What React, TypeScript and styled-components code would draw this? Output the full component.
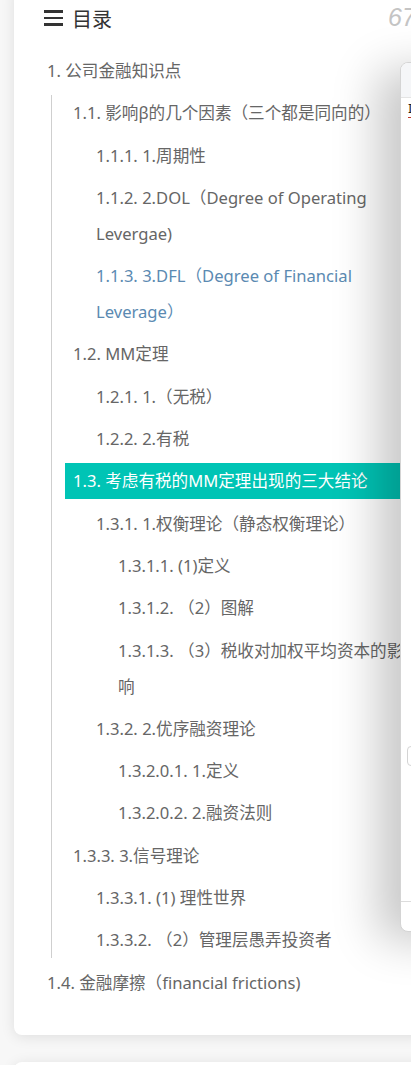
import React from 'react';
import styled, { createGlobalStyle } from 'styled-components';

type TocItem = { label: string; children?: TocItem[]; active?: boolean; visited?: boolean };

const toc: TocItem[] = [
  {
    label: '1. 公司金融知识点',
    children: [
      {
        label: '1.1. 影响β的几个因素（三个都是同向的）',
        children: [
          { label: '1.1.1. 1.周期性' },
          { label: '1.1.2. 2.DOL（Degree of Operating Levergae)' },
          { label: '1.1.3. 3.DFL（Degree of Financial Leverage）', visited: true },
        ],
      },
      {
        label: '1.2. MM定理',
        children: [{ label: '1.2.1. 1.（无税）' }, { label: '1.2.2. 2.有税' }],
      },
      {
        label: '1.3. 考虑有税的MM定理出现的三大结论',
        active: true,
        children: [
          {
            label: '1.3.1. 1.权衡理论（静态权衡理论）',
            children: [
              { label: '1.3.1.1. (1)定义' },
              { label: '1.3.1.2. （2）图解' },
              { label: '1.3.1.3. （3）税收对加权平均资本的影响' },
            ],
          },
          {
            label: '1.3.2. 2.优序融资理论',
            children: [{ label: '1.3.2.0.1. 1.定义' }, { label: '1.3.2.0.2. 2.融资法则' }],
          },
        ],
      },
      {
        label: '1.3.3. 3.信号理论',
        children: [{ label: '1.3.3.1. (1) 理性世界' }, { label: '1.3.3.2. （2）管理层愚弄投资者' }],
      },
    ],
  },
  { label: '1.4. 金融摩擦（financial frictions)' },
];

const GlobalStyle = createGlobalStyle`
  html, body {
    margin: 0;
    padding: 0;
    background: #f7f7f7;
    overflow-x: hidden;
  }
  body {
    font-family: "Noto Sans", "Noto Sans CJK SC", sans-serif;
  }
`;

const Page = styled.div`
  position: relative;
  width: 411px;
  height: 1065px;
  overflow: hidden;
`;

const Card = styled.section`
  position: relative;
  margin: -14px 0 0 14px;
  width: 416px;
  padding: 14px 16px 34px 25px;
  box-sizing: border-box;
  background: #fff;
  border-radius: 8px;
  box-shadow: 0 2px 14px rgba(0, 0, 0, 0.1);
`;

const NextCard = styled.section`
  margin: 27px 0 0 14px;
  width: 416px;
  height: 40px;
  background: #fff;
  border-radius: 8px 0 0 0;
  box-shadow: 0 2px 14px rgba(0, 0, 0, 0.1);
`;

const Header = styled.header`
  display: flex;
  align-items: center;
  gap: 9px;
  height: 36px;
  padding-left: 5px;
  margin-bottom: 17px;
`;

const MenuIcon = styled.span`
  display: flex;
  flex-direction: column;
  gap: 4px;
  width: 19px;

  i {
    display: block;
    height: 2.5px;
    background: #333;
  }
`;

const Title = styled.h2`
  margin: 0;
  font-size: 20px;
  font-weight: 400;
  color: #333;
  font-family: "Noto Sans CJK SC", sans-serif;
`;

const Count = styled.span`
  position: absolute;
  top: 17px;
  left: 374px;
  font-size: 25px;
  line-height: 28px;
  font-style: italic;
  color: #c4c4c4;
  font-family: "Liberation Sans", sans-serif;
`;

const List = styled.ul<{ $level: number }>`
  list-style: none;
  margin: 0;
  padding: 0;
  ${(p) =>
    p.$level === 1
      ? `margin-left: 12px; padding-left: 13px; border-left: 1px solid #cfcfcf;`
      : p.$level > 1
      ? `padding-left: ${p.$level === 2 ? 23 : 22}px;`
      : ''}
`;

const Item = styled.li`
  margin-top: 6.3px;
`;

const Link = styled.a<{ $active?: boolean; $visited?: boolean }>`
  display: block;
  padding: 0 8px;
  font-size: 16.6px;
  line-height: 36px;
  color: ${(p) => (p.$active ? '#fff' : p.$visited ? '#5b8ab2' : '#666')};
  background: ${(p) => (p.$active ? '#00c4b5' : 'transparent')};
  text-decoration: none;
  cursor: pointer;
`;

const Popup = styled.aside`
  position: absolute;
  top: 62px;
  left: 400px;
  width: 300px;
  height: 868px;
  background: #fff;
  border: 1px solid #d4d4d4;
  border-radius: 8px;
  box-shadow: -22px 8px 46px rgba(0, 0, 0, 0.22);
  overflow: hidden;
`;

const PopupHead = styled.div`
  height: 34px;
  background: #f5f6f8;
  border-bottom: 1px solid #e4e4e4;
`;

const PopupText = styled.div`
  padding: 2px 7px;
  font-size: 13px;
  color: #222;
  line-height: 16px;

  span {
    border-bottom: 1px solid #c0392b;
  }
`;

const PopupInput = styled.div`
  margin: 628px 0 0 6px;
  width: 60px;
  height: 18px;
  border: 1px solid #d4d4d4;
  border-radius: 4px;
`;

const PopupFoot = styled.div`
  margin-top: 135px;
  border-top: 1px solid #dcdcdc;
`;

function Tree({ items, level }: { items: TocItem[]; level: number }) {
  return (
    <List $level={level}>
      {items.map((item) => (
        <Item key={item.label}>
          <Link $active={item.active} $visited={item.visited}>
            {item.label}
          </Link>
          {item.children && <Tree items={item.children} level={level + 1} />}
        </Item>
      ))}
    </List>
  );
}

export default function App() {
  return (
    <Page>
      <GlobalStyle />
      <Card>
        <Header>
          <MenuIcon>
            <i />
            <i />
            <i />
          </MenuIcon>
          <Title>目录</Title>
        </Header>
        <Count>67</Count>
        <Tree items={toc} level={0} />
      </Card>
      <NextCard />
      <Popup>
        <PopupHead />
        <PopupText>
          <span>I</span>
        </PopupText>
        <PopupInput />
        <PopupFoot />
      </Popup>
    </Page>
  );
}
